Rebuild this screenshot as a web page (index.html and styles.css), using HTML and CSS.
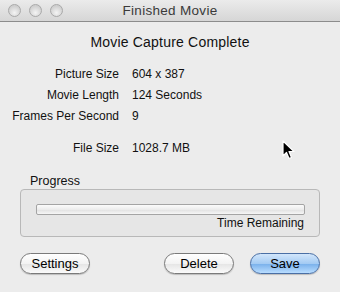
FILE: index.html
```html
<!DOCTYPE html>
<html lang="en">
<head>
    <meta charset="UTF-8">
    <title>Finished Movie</title>
    <link rel="stylesheet" href="styles.css">
</head>
<body>
    <div class="window">
        <div class="titlebar">
            <div class="lights">
                <span class="light"></span>
                <span class="light"></span>
                <span class="light"></span>
            </div>
            <div class="title">Finished Movie</div>
            <div></div>
        </div>

        <div class="content">
            <h1>Movie Capture Complete</h1>

            <div class="info">
                <div class="label">Picture Size</div>
                <div class="value">604 x 387</div>
                <div class="label">Movie Length</div>
                <div class="value">124 Seconds</div>
                <div class="label">Frames Per Second</div>
                <div class="value">9</div>
            </div>

            <div class="info filesize">
                <div class="label">File Size</div>
                <div class="value">1028.7 MB</div>
            </div>

            <div class="progress-label">Progress</div>
            <div class="progress-box">
                <div class="bar"></div>
                <div class="remaining">Time Remaining</div>
            </div>

            <div class="buttons">
                <button class="btn">Settings</button>
                <div class="spacer"></div>
                <button class="btn">Delete</button>
                <button class="btn default">Save</button>
            </div>
        </div>

        <svg class="cursor" width="13" height="20" viewBox="0 0 13 20">
            <path d="M1 1 L1 16 L4.5 12.5 L7 18.5 L9.5 17.5 L7 11.5 L12 11.5 Z" fill="#000" stroke="#fff" stroke-width="1.2" stroke-linejoin="round"/>
        </svg>
    </div>
</body>
</html>
```

FILE: styles.css
```css
* {
    margin: 0;
    padding: 0;
    box-sizing: border-box;
}

body {
    font-family: 'Liberation Sans', Arial, sans-serif;
    font-size: 12px;
    color: #111;
    background: #ececec;
}

.window {
    position: relative;
    width: 340px;
    height: 292px;
    background: #ececec;
    overflow: hidden;
}

.titlebar {
    height: 22px;
    display: grid;
    grid-template-columns: 1fr auto 1fr;
    align-items: center;
    background: linear-gradient(#ebebeb, #d6d6d6);
    border-bottom: 1px solid #8c8c8c;
}

.lights {
    display: flex;
    gap: 8px;
    padding-left: 8px;
}

.light {
    width: 13px;
    height: 13px;
    border-radius: 50%;
    border: 1px solid #a9a9a9;
    background: radial-gradient(circle at 50% 70%, #f4f4f4, #cfcfcf 70%);
}

.title {
    font-size: 13.5px;
    letter-spacing: 0.3px;
    color: #3a3a3a;
}

.content {
    padding: 12px 20px 0 20px;
}

h1 {
    font-size: 14px;
    letter-spacing: 0.2px;
    font-weight: normal;
    text-align: center;
    line-height: 16px;
    margin-bottom: 13px;
}

.info {
    display: grid;
    grid-template-columns: 107px auto;
    column-gap: 13px;
    grid-auto-rows: 21px;
    align-items: center;
    margin-left: -8px;
    white-space: nowrap;
}

.label {
    text-align: right;
}

.filesize {
    margin-top: 11px;
}

.progress-label {
    font-size: 12.5px;
    line-height: 14px;
    margin-top: 16px;
    padding-left: 10px;
}

.progress-box {
    margin-top: 1px;
    height: 48px;
    border: 1px solid #b8b8b8;
    border-radius: 4px;
    background: #e6e6e6;
    padding: 14px 14px 0 15px;
}

.bar {
    height: 11px;
    border: 1px solid #a4a4a4;
    border-radius: 2px;
    background: linear-gradient(#fbfbfb, #ececec 50%, #e2e2e2 55%, #f6f6f6);
}

.remaining {
    text-align: right;
    padding-right: 1px;
    margin-top: 1px;
    line-height: 14px;
}

.buttons {
    display: flex;
    gap: 16px;
    margin-top: 16px;
}

.spacer {
    flex: 1;
}

.btn {
    width: 70px;
    height: 21px;
    border-radius: 11px;
    border: 1px solid #7a7a7a;
    background: linear-gradient(#ffffff, #f3f3f3 50%, #e6e6e6 55%, #fbfbfb);
    font-family: 'Liberation Sans', Arial, sans-serif;
    font-size: 13px;
    color: #000;
    box-shadow: 0 1px 1px rgba(0,0,0,0.2);
}

.btn.default {
    border-color: #4a6fa5;
    background: linear-gradient(#d2e6fb, #a4cbf3 50%, #7db3ec 55%, #b9ddff);
}

.cursor {
    position: absolute;
    left: 282px;
    top: 140px;
}
```
